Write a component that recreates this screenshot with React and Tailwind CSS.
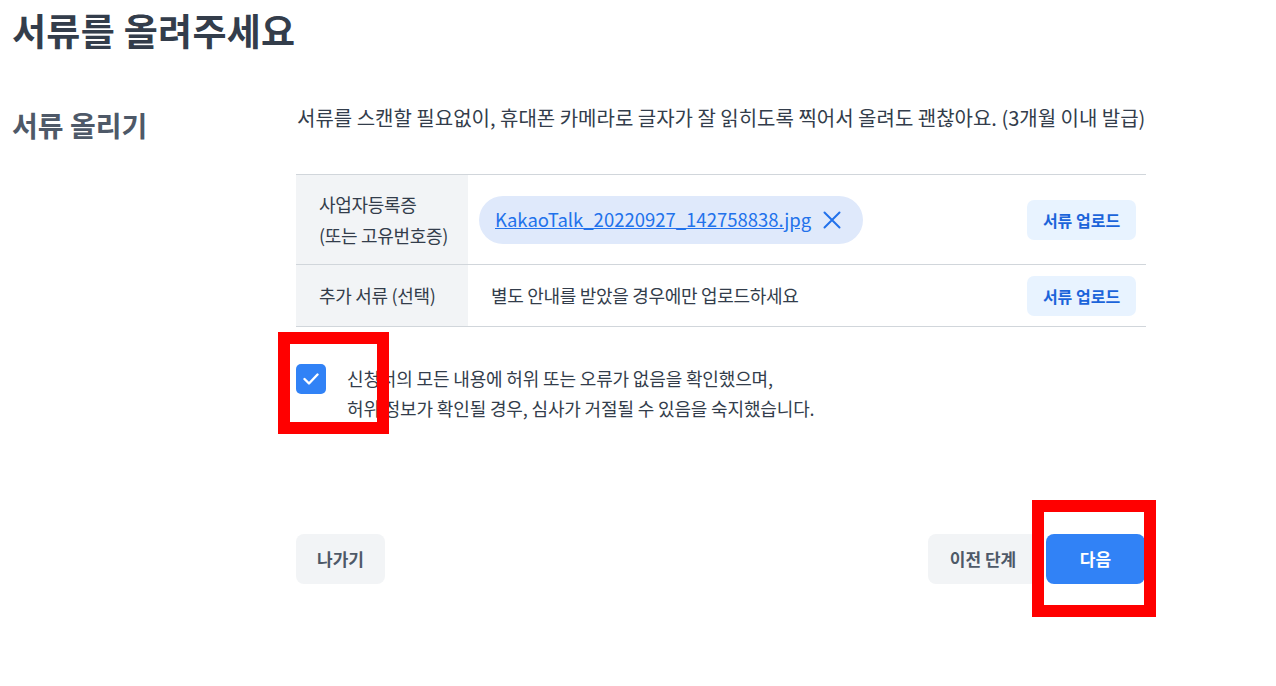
import { useState } from 'react'

const FONT = { fontFamily: '"Noto Sans CJK KR", "Noto Sans", sans-serif' }

const DOCS = [
  { label: ['사업자등록증', '(또는 고유번호증)'], file: 'KakaoTalk_20220927_142758838.jpg' },
  { label: ['추가 서류 (선택)'], hint: '별도 안내를 받았을 경우에만 업로드하세요' },
]

function CloseIcon() {
  return (
    <svg width="18" height="18" viewBox="0 0 18 18" fill="none" stroke="#2272eb" strokeWidth="2" strokeLinecap="round">
      <path d="M1.5 1.5 16.5 16.5M16.5 1.5 1.5 16.5" />
    </svg>
  )
}

function CheckIcon() {
  return (
    <svg width="16" height="12" viewBox="0 0 16 12" fill="none" stroke="white" strokeWidth="2.4" strokeLinecap="round" strokeLinejoin="round">
      <path d="M1.5 6 6 10.5 14.5 1.5" />
    </svg>
  )
}

export default function App() {
  const [agreed, setAgreed] = useState(true)

  return (
    <div className="relative w-[1276px] h-[686px] bg-white overflow-hidden text-[#333d4b]" style={FONT}>
      {/* Header */}
      <h1 className="pl-[12px] pt-[6px] text-[37px] leading-[48px] font-bold tracking-[0.3px] text-[#333d4b]">
        서류를 올려주세요
      </h1>

      <div className="flex mt-[50px]">
        <div className="w-[296px] pl-[12px] pt-[3px]">
          <h2 className="text-[28px] leading-[36px] font-bold text-[#4e5968]">서류 올리기</h2>
        </div>

        <div className="w-[850px]">
          <p className="text-[20px] leading-[30px] pl-[1px] -mt-[1px]">
            서류를 스캔할 필요없이, 휴대폰 카메라로 글자가 잘 읽히도록 찍어서 올려도 괜찮아요. (3개월 이내 발급)
          </p>

          {/* Document table */}
          <div className="mt-[41px] border-t border-[#d1d6db]">
            {DOCS.map((doc, i) => (
              <div key={i} className={`flex border-b border-[#d1d6db] ${doc.file ? 'h-[90px]' : 'h-[62px]'}`}>
                <div className="w-[172px] bg-[#f2f4f6] flex flex-col justify-center pl-[23px] text-[18px] leading-[31px] tracking-[-0.3px] text-[#333d4b]">
                  {doc.label.map((l) => <span key={l}>{l}</span>)}
                </div>
                <div className="flex-1 flex items-center justify-between pl-[11px] pr-[10px]">
                  {doc.file ? (
                    <div className="flex items-center gap-[12px] h-[48px] rounded-full bg-[#dfe9fb] pl-[16px] pr-[22px]">
                      <a href="#" className="text-[#2272eb] underline text-[18.5px]">{doc.file}</a>
                      <CloseIcon />
                    </div>
                  ) : (
                    <span className="pl-[12px] text-[18px] tracking-[-0.3px] text-[#333d4b]">{doc.hint}</span>
                  )}
                  <button className="h-[40px] w-[109px] rounded-[7px] bg-[#e8f3ff] text-[#1b64da] text-[16px] font-bold">
                    서류 업로드
                  </button>
                </div>
              </div>
            ))}
          </div>

          {/* Agreement */}
          <label className="flex items-start mt-[36px] cursor-pointer" onClick={() => setAgreed(!agreed)}>
            <span className={`mt-[1px] w-[30px] h-[30px] rounded-[5px] flex items-center justify-center shrink-0 ${agreed ? 'bg-[#3182f6]' : 'bg-[#e5e8eb]'}`}>
              {agreed && <CheckIcon />}
            </span>
            <span className="ml-[21px] text-[18px] leading-[30px] tracking-[-0.15px] text-[#333d4b]">
              신청서의 모든 내용에 허위 또는 오류가 없음을 확인했으며,<br />
              허위 정보가 확인될 경우, 심사가 거절될 수 있음을 숙지했습니다.
            </span>
          </label>

          {/* Footer buttons */}
          <div className="flex items-center justify-between mt-[111px]">
            <button className="h-[50px] w-[89px] rounded-[8px] bg-[#f2f4f6] text-[#4e5968] text-[17px] font-bold">
              나가기
            </button>
            <div className="flex items-center gap-[8px]">
              <button className="h-[50px] w-[110px] rounded-[8px] bg-[#f2f4f6] text-[#4e5968] text-[17px] font-bold">
                이전 단계
              </button>
              <button className="h-[50px] w-[99px] mr-[1px] rounded-[8px] bg-[#3182f6] text-white text-[17px] font-bold">
                다음
              </button>
            </div>
          </div>
        </div>
      </div>

      {/* Red annotation boxes */}
      <div className="absolute left-[278px] top-[332px] w-[111px] h-[102px] border-[12px] border-[#ff0000]" />
      <div className="absolute left-[1032px] top-[500px] w-[124px] h-[117px] border-[12px] border-[#ff0000]" />
    </div>
  )
}
